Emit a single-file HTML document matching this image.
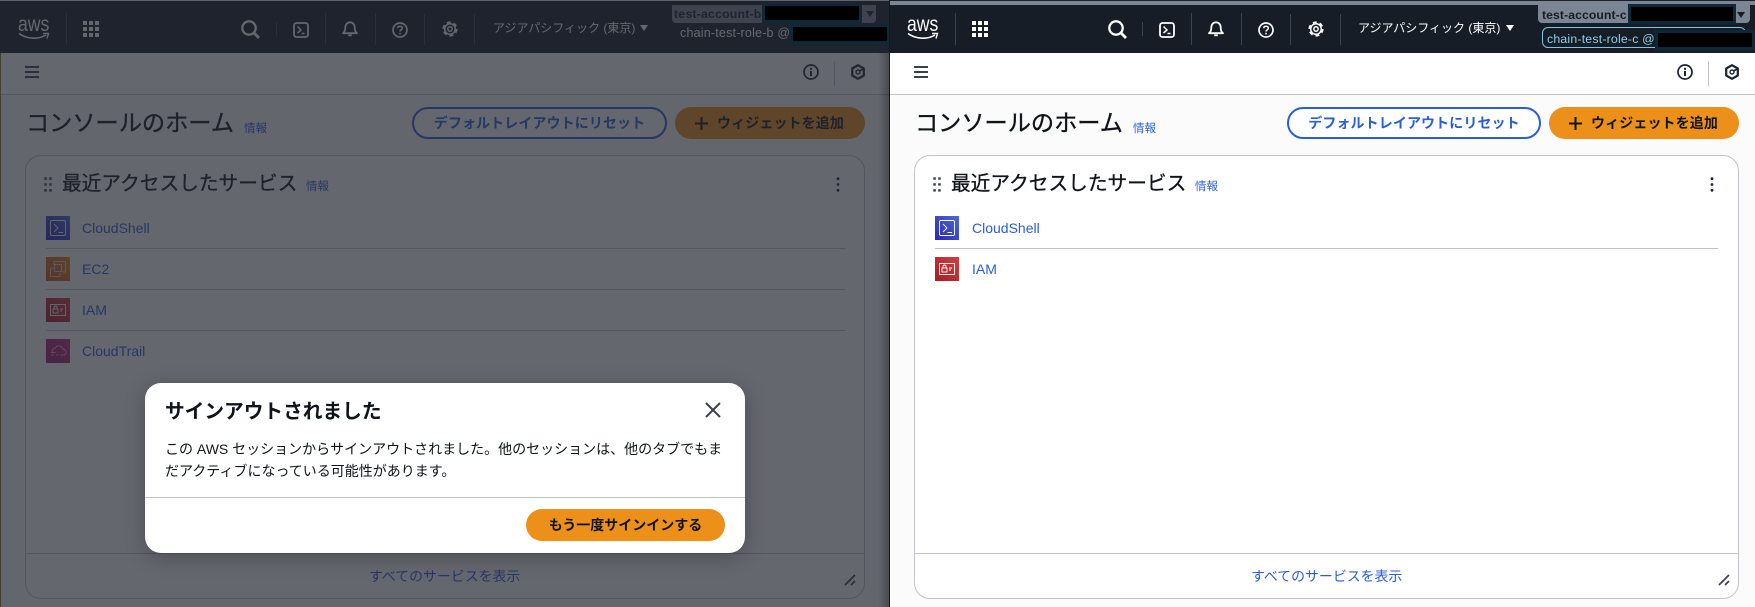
<!DOCTYPE html>
<html lang="ja">
<head>
<meta charset="utf-8">
<title>AWS Console</title>
<style>
html,body{margin:0;padding:0;background:#fff}
body{width:1755px;height:607px;position:relative;overflow:hidden;font-family:"Liberation Sans","Noto Sans CJK JP",sans-serif;color:#0f141a}
.p{position:absolute;top:0;height:607px;overflow:hidden;background:#fff}
.a{position:absolute}
.t{position:absolute;white-space:nowrap;line-height:20px;height:20px}
.nav{position:absolute;left:0;right:0;top:5px;height:48px;background:#161d26}
.strip{position:absolute;left:0;right:0;top:1px;height:4px;background:#7c8594}
.sep{position:absolute;width:1px;background:#3d4450}
.main{position:absolute;left:0;right:0;top:95px;bottom:0;background:#fbfbfb}
.tb{position:absolute;left:0;right:0;top:53px;height:41px;background:#fff;border-bottom:1px solid #c2c2cc}
.h1{font-size:23.2px;font-weight:400;-webkit-text-stroke:.35px currentColor;color:#0f141a;line-height:28px;height:28px}
.h2{font-size:19.7px;font-weight:400;-webkit-text-stroke:.3px currentColor;color:#0f141a;line-height:26px;height:26px}
.info{font-size:11.5px;color:#295eda}
.btn{position:absolute;top:107px;height:32px;border-radius:17px;box-sizing:border-box;text-align:center;font-size:14px;line-height:28px;font-weight:700}
.reset{width:255px;border:2px solid #295eda;color:#295eda;background:#fff;letter-spacing:.1px}
.add{width:190px;background:#ec9019;color:#0f141a;line-height:32px;letter-spacing:.1px;padding-left:21px}
.card{position:absolute;top:155px;height:444px;box-sizing:border-box;background:#fff;border:1.5px solid #c2c2cc;border-radius:16px}
.link{font-size:14px;color:#295eda}
.row{position:absolute;height:1px;background:#c2c2cc}
.ic{position:absolute;width:24px;height:24px}
.k{position:absolute;background:#000;box-shadow:0 0 0 3px #0e2838}
.logo{transform:scaleX(.84);transform-origin:left center}
svg{position:absolute;display:block;overflow:visible}
.ov{position:absolute;left:0;top:0;width:889px;height:607px;background:rgba(35,39,50,.7)}
.sh{position:absolute;left:878px;top:53px;width:11px;height:554px;background:linear-gradient(90deg,rgba(0,0,0,0),rgba(0,0,0,.28))}
.modal{position:absolute;left:145px;top:383px;width:600px;height:170px;background:#fff;border-radius:16px;box-shadow:0 4px 20px rgba(0,0,0,.25)}
</style>
</head>
<body>
<svg width="0" height="0" style="position:absolute">
<defs>
<symbol id="smile" viewBox="0 0 32 9"><path d="M1 1.5C9 7.5 21 7.5 28 3" fill="none" stroke="currentColor" stroke-width="1.6"/><path d="M25 1.5h5.5L29 6.5" fill="none" stroke="currentColor" stroke-width="1.4"/></symbol>
<symbol id="grid" viewBox="0 0 16 16"><g fill="currentColor"><rect x="0" y="0" width="4" height="4"/><rect x="6" y="0" width="4" height="4"/><rect x="12" y="0" width="4" height="4"/><rect x="0" y="6" width="4" height="4"/><rect x="6" y="6" width="4" height="4"/><rect x="12" y="6" width="4" height="4"/><rect x="0" y="12" width="4" height="4"/><rect x="6" y="12" width="4" height="4"/><rect x="12" y="12" width="4" height="4"/></g></symbol>
<symbol id="search" viewBox="0 0 19 19"><circle cx="8" cy="8" r="6.7" fill="none" stroke="currentColor" stroke-width="2.3"/><path d="M12.8 12.8L18 18" stroke="currentColor" stroke-width="2.8" fill="none"/></symbol>
<symbol id="term" viewBox="0 0 16 16"><rect x="1" y="1" width="14" height="14" rx="2.5" fill="none" stroke="currentColor" stroke-width="1.8"/><path d="M4.5 4.5L8 8 4.5 11" fill="none" stroke="currentColor" stroke-width="1.5"/><path d="M8.5 11.5h3" stroke="currentColor" stroke-width="1.5"/></symbol>
<symbol id="bell" viewBox="0 0 16 16"><path d="M1 12.2h14c-2-1.5-2.3-3-2.3-5.5C12.7 3.500 10.8 1.300 8 1.300S3.300 3.500 3.300 6.700C3.300 9.200 3 10.700 1 12.200z" fill="none" stroke="currentColor" stroke-width="1.8" stroke-linejoin="round"/><path d="M6.200 14.300h3.600" stroke="currentColor" stroke-width="1.8"/></symbol>
<symbol id="help" viewBox="0 0 16 16"><circle cx="8" cy="8" r="7" fill="none" stroke="currentColor" stroke-width="1.7"/><path d="M5.700 6.200C5.800 4.800 6.800 4.200 8 4.200c1.300 0 2.300.8 2.300 2 0 1.600-2.300 1.700-2.300 3.300" fill="none" stroke="currentColor" stroke-width="1.5"/><rect x="7.200" y="10.800" width="1.600" height="1.600" fill="currentColor"/></symbol>
<symbol id="gear" viewBox="0 0 16 16"><circle cx="8" cy="8" r="5.300" fill="none" stroke="currentColor" stroke-width="1.500"/><circle cx="8" cy="8" r="6.700" fill="none" stroke="currentColor" stroke-width="1.800" stroke-dasharray="4 3.020"/><circle cx="8" cy="8" r="2.200" fill="none" stroke="currentColor" stroke-width="1.500"/></symbol>
<symbol id="burger" viewBox="0 0 14 12"><path d="M0 1h14M0 6h14M0 11h14" stroke="currentColor" stroke-width="2" fill="none"/></symbol>
<symbol id="iinfo" viewBox="0 0 16 16"><circle cx="8" cy="8" r="7" fill="none" stroke="currentColor" stroke-width="1.7"/><path d="M8 7v5" stroke="currentColor" stroke-width="2"/><rect x="7" y="3.800" width="2" height="2" fill="currentColor"/></symbol>
<symbol id="hex" viewBox="0 0 14 16"><path d="M7 1.200L12.800 4.500V11.500L7 14.800 1.200 11.500V4.500z" fill="none" stroke="currentColor" stroke-width="2.200" stroke-linejoin="round"/><circle cx="7" cy="8" r="2" fill="none" stroke="currentColor" stroke-width="1.400"/><path d="M8.500 7L12.500 4.800" stroke="currentColor" stroke-width="1.600"/></symbol>
<symbol id="plus" viewBox="0 0 14 14"><path d="M7 0v14M0 7h14" stroke="currentColor" stroke-width="2.200" fill="none"/></symbol>
<symbol id="drag" viewBox="0 0 8 15"><g fill="currentColor"><rect x=".3" y=".3" width="2.500" height="2.500"/><rect x="5.200" y=".3" width="2.500" height="2.500"/><rect x=".3" y="6.200" width="2.500" height="2.500"/><rect x="5.200" y="6.200" width="2.500" height="2.500"/><rect x=".3" y="12.100" width="2.500" height="2.500"/><rect x="5.200" y="12.100" width="2.500" height="2.500"/></g></symbol>
<symbol id="kebab" viewBox="0 0 4 15"><g fill="currentColor"><circle cx="2" cy="1.700" r="1.400"/><circle cx="2" cy="7.500" r="1.400"/><circle cx="2" cy="13.300" r="1.400"/></g></symbol>
<symbol id="resize" viewBox="0 0 12 12"><path d="M1 11L11 1M7 11l4-4" stroke="currentColor" stroke-width="1.700" fill="none"/></symbol>
<linearGradient id="gb" x1="0" y1="1" x2="1" y2="0"><stop offset="0" stop-color="#2e27ad"/><stop offset="1" stop-color="#4b6ae0"/></linearGradient>
<linearGradient id="go" x1="0" y1="1" x2="1" y2="0"><stop offset="0" stop-color="#c8511b"/><stop offset="1" stop-color="#e08a20"/></linearGradient>
<linearGradient id="gr" x1="0" y1="1" x2="1" y2="0"><stop offset="0" stop-color="#a81c27"/><stop offset="1" stop-color="#d04040"/></linearGradient>
<linearGradient id="gp" x1="0" y1="1" x2="1" y2="0"><stop offset="0" stop-color="#a01a6a"/><stop offset="1" stop-color="#c0307c"/></linearGradient>
<symbol id="svc-shell" viewBox="0 0 24 24"><rect width="24" height="24" fill="url(#gb)"/><rect x="4.500" y="4.500" width="15" height="15" rx="1.500" fill="none" stroke="#fff" stroke-width=".9"/><path d="M8 8l4 4-4 4M12.500 16.500h4.500" fill="none" stroke="#fff" stroke-width=".9"/></symbol>
<symbol id="svc-ec2" viewBox="0 0 24 24"><rect width="24" height="24" fill="url(#go)"/><path d="M8 8V4.500h11.500V15H16M8 11H4.500v8.500H14V16" fill="none" stroke="#fff" stroke-width=".8" opacity=".8"/><rect x="8.500" y="7.500" width="7" height="7" fill="none" stroke="#fff" stroke-width="1" stroke-dasharray="1.500 .5" opacity=".8"/></symbol>
<symbol id="svc-iam" viewBox="0 0 24 24"><rect width="24" height="24" fill="url(#gr)"/><rect x="4.500" y="6.500" width="15" height="11" fill="none" stroke="#fff" stroke-width=".9"/><rect x="7" y="11" width="5" height="4" fill="none" stroke="#fff" stroke-width=".9"/><path d="M8 11V9.500a1.500 1.500 0 013 0V11M14 11h3M14 13h2" fill="none" stroke="#fff" stroke-width=".9"/></symbol>
<symbol id="svc-trail" viewBox="0 0 24 24"><rect width="24" height="24" fill="url(#gp)"/><path d="M6 13c0-3 2-3.500 3-3.500C10 7 12 6.500 14 7c1.500.5 2.500 2 2.500 3 2 0 3.500 1.500 3.500 3.500 0 1.500-1 2.500-2.500 2.500h-3M5 16h3M10 16h2.500M4.500 13.500h5" fill="none" stroke="#fff" stroke-width=".7" opacity=".8"/></symbol>
</defs>
</svg>

<!-- LEFT PANEL -->
<div class="p" style="left:0;width:889px">
  <div class="a" style="left:0;top:0;width:889px;height:1px;background:#f0f0f0"></div>
  <div class="nav" style="top:1px;height:52px"></div>

  <div class="t logo" style="left:18px;top:15px;font-size:21px;color:#fff">aws</div>
  <svg style="left:18px;top:32px;color:#fff" width="32" height="9"><use href="#smile"/></svg>
  <div class="sep" style="left:66px;top:13px;height:32px"></div>
  <svg style="left:83px;top:21px;color:#fff" width="16" height="16"><use href="#grid"/></svg>
  <svg style="left:241px;top:20px;color:#fff" width="19" height="19"><use href="#search"/></svg>
  <div class="sep" style="left:276px;top:22px;height:14px"></div>
  <svg style="left:293px;top:22px;color:#fff" width="16" height="16"><use href="#term"/></svg>
  <div class="sep" style="left:325px;top:13px;height:32px"></div>
  <svg style="left:342px;top:21px;color:#fff" width="16" height="16"><use href="#bell"/></svg>
  <div class="sep" style="left:375px;top:13px;height:32px"></div>
  <svg style="left:392px;top:22px;color:#fff" width="16" height="16"><use href="#help"/></svg>
  <div class="sep" style="left:424px;top:14px;height:31px"></div>
  <svg style="left:442px;top:21px;color:#fff" width="16" height="16"><use href="#gear"/></svg>
  <div class="sep" style="left:474px;top:14px;height:31px"></div>
  <div class="t" style="left:493px;top:18px;font-size:12px;color:#fff">アジアパシフィック (東京)</div>
  <svg style="left:640px;top:25px" width="8" height="6"><path d="M0 0h8L4 6z" fill="#fff"/></svg>

  <div class="a" style="left:672px;top:5px;width:204px;height:18px;background:#7c8594;border-radius:0 0 4px 4px"></div>
  <div class="t" style="left:672px;top:4px;width:90px;overflow:hidden;font-size:12.3px;font-weight:700;color:#161d26;letter-spacing:.2px"><span style="margin-left:2px">test-account-b (</span></div>
  <svg style="left:866px;top:11px" width="8" height="6"><path d="M0 0h8L4 6z" fill="#161d26"/></svg>
  <div class="t" style="left:680px;top:23px;font-size:12.5px;color:#fff;letter-spacing:.2px">chain-test-role-b @</div>

  <div class="tb"></div>
  <svg style="left:25px;top:66px;color:#3b414d" width="14" height="12"><use href="#burger"/></svg>
  <svg style="left:803px;top:64px;color:#1b232d" width="16" height="16"><use href="#iinfo"/></svg>
  <div class="a" style="left:834px;top:61px;width:1px;height:25px;background:#c2c2cc"></div>
  <svg style="left:851px;top:64px;color:#1b232d" width="14" height="16"><use href="#hex"/></svg>

  <div class="main"></div>
  <div class="t h1" style="left:26px;top:109px">コンソールのホーム</div>
  <div class="t info" style="left:244px;top:119px">情報</div>
  <div class="btn reset" style="left:412px">デフォルトレイアウトにリセット</div>
  <div class="btn add" style="left:675px">ウィジェットを追加</div>
  <svg style="left:695px;top:117px;color:#0f141a" width="13" height="13"><use href="#plus"/></svg>

  <div class="card" style="left:25px;width:840px"></div>
  <svg style="left:44px;top:177px;color:#3b414d" width="8" height="15"><use href="#drag"/></svg>
  <div class="t h2" style="left:62px;top:171px">最近アクセスしたサービス</div>
  <div class="t info" style="left:306px;top:177px">情報</div>
  <svg style="left:836px;top:177px;color:#1b232d" width="4" height="15"><use href="#kebab"/></svg>

  <svg class="ic" style="left:46px;top:216px"><use href="#svc-shell"/></svg>
  <div class="t link" style="left:82px;top:218px">CloudShell</div>
  <div class="row" style="left:46px;top:248px;width:799px"></div>
  <svg class="ic" style="left:46px;top:257px"><use href="#svc-ec2"/></svg>
  <div class="t link" style="left:82px;top:259px">EC2</div>
  <div class="row" style="left:46px;top:289px;width:799px"></div>
  <svg class="ic" style="left:46px;top:298px"><use href="#svc-iam"/></svg>
  <div class="t link" style="left:82px;top:300px">IAM</div>
  <div class="row" style="left:46px;top:330px;width:799px"></div>
  <svg class="ic" style="left:46px;top:339px"><use href="#svc-trail"/></svg>
  <div class="t link" style="left:82px;top:341px">CloudTrail</div>

  <div class="row" style="left:25px;top:553px;width:840px"></div>
  <div class="t link" style="left:369px;top:566px;font-size:13.9px">すべてのサービスを表示</div>
  <svg style="left:844px;top:574px;color:#3b414d" width="12" height="12"><use href="#resize"/></svg>

  <div class="ov"></div>
  <div class="sh"></div>
  <div class="a" style="left:0;top:53px;width:1px;height:554px;background:#3f4030"></div>
  <div class="k" style="left:765px;top:6px;width:94px;height:14px"></div>
  <div class="k" style="left:793px;top:27px;width:94px;height:14px"></div>

  <div class="modal">
    <div class="t" style="left:20px;top:16px;font-size:19.7px;font-weight:700;color:#0f141a;line-height:26px;height:26px">サインアウトされました</div>
    <svg style="left:560px;top:19px" width="16" height="16"><path d="M1 1l14 14M15 1L1 15" stroke="#3b414d" stroke-width="2" fill="none"/></svg>
    <div class="t" style="left:20px;top:56px;font-size:14px;color:#0f141a">この AWS セッションからサインアウトされました。他のセッションは、他のタブでもま</div>
    <div class="t" style="left:20px;top:78px;font-size:14px;color:#0f141a">だアクティブになっている可能性があります。</div>
    <div class="a" style="left:0;top:114px;width:600px;height:1px;background:#c2c2cc"></div>
    <div class="a" style="left:381px;top:126px;width:199px;height:32px;border-radius:17px;background:#ec9019;text-align:center;font-size:14px;font-weight:700;line-height:32px;color:#0f141a">もう一度サインインする</div>
  </div>
</div>

<!-- divider -->
<div class="a" style="left:889px;top:0;width:1.5px;height:607px;background:#14181e"></div>

<!-- RIGHT PANEL -->
<div class="p" style="left:890px;width:865px">
  <div class="a" style="left:0;top:0;width:865px;height:1px;background:#1d2129"></div>
  <div class="strip"></div>
  <div class="nav"></div>
</div>
<div class="a" style="left:890px;top:53px;width:865px;height:554px;background:#fff"></div>

<div class="t logo" style="left:907px;top:15px;font-size:21px;color:#fff">aws</div>
<svg style="left:907px;top:32px;color:#fff" width="32" height="9"><use href="#smile"/></svg>
<div class="sep" style="left:955px;top:13px;height:32px"></div>
<svg style="left:972px;top:21px;color:#fff" width="16" height="16"><use href="#grid"/></svg>
<svg style="left:1108px;top:20px;color:#fff" width="19" height="19"><use href="#search"/></svg>
<div class="sep" style="left:1142px;top:22px;height:14px"></div>
<svg style="left:1159px;top:22px;color:#fff" width="16" height="16"><use href="#term"/></svg>
<div class="sep" style="left:1191px;top:13px;height:32px"></div>
<svg style="left:1208px;top:21px;color:#fff" width="16" height="16"><use href="#bell"/></svg>
<div class="sep" style="left:1241px;top:13px;height:32px"></div>
<svg style="left:1258px;top:22px;color:#fff" width="16" height="16"><use href="#help"/></svg>
<div class="sep" style="left:1290px;top:14px;height:31px"></div>
<svg style="left:1308px;top:21px;color:#fff" width="16" height="16"><use href="#gear"/></svg>
<div class="sep" style="left:1340px;top:14px;height:31px"></div>
<div class="t" style="left:1358px;top:18px;font-size:12px;color:#fff">アジアパシフィック (東京)</div>
<svg style="left:1506px;top:25px" width="8" height="6"><path d="M0 0h8L4 6z" fill="#fff"/></svg>

<div class="a" style="left:1538px;top:5px;width:212px;height:18px;background:#7c8594;border-radius:0 0 4px 4px"></div>
<div class="t" style="left:1542px;top:5px;font-size:12.2px;font-weight:700;color:#161d26;letter-spacing:.1px">test-account-c</div>
<div class="k" style="left:1631px;top:7px;width:102px;height:14px"></div>
<svg style="left:1737px;top:12px" width="8" height="6"><path d="M0 0h8L4 6z" fill="#161d26"/></svg>
<div class="a" style="left:1542px;top:27px;width:204px;height:21px;box-sizing:border-box;border:1px solid #7fc4e0;border-radius:6px"></div>
<div class="t" style="left:1547px;top:29px;font-size:12.3px;color:#8fd0ea;letter-spacing:.2px">chain-test-role-c @</div>
<div class="k" style="left:1658px;top:33px;width:94px;height:14px"></div>

<div class="a" style="left:890px;top:53px;width:865px;height:41px;background:#fff;border-bottom:1px solid #c2c2cc"></div>
<svg style="left:914px;top:66px;color:#3b414d" width="14" height="12"><use href="#burger"/></svg>
<svg style="left:1677px;top:64px;color:#1b232d" width="16" height="16"><use href="#iinfo"/></svg>
<div class="a" style="left:1708px;top:61px;width:1px;height:25px;background:#c2c2cc"></div>
<svg style="left:1725px;top:64px;color:#1b232d" width="14" height="16"><use href="#hex"/></svg>

<div class="a" style="left:890px;top:95px;width:865px;height:512px;background:#fbfbfb"></div>
<div class="t h1" style="left:915px;top:109px">コンソールのホーム</div>
<div class="t info" style="left:1133px;top:119px">情報</div>
<div class="btn reset" style="left:1287px;width:254px">デフォルトレイアウトにリセット</div>
<div class="btn add" style="left:1549px">ウィジェットを追加</div>
<svg style="left:1569px;top:117px;color:#0f141a" width="13" height="13"><use href="#plus"/></svg>

<div class="card" style="left:914px;width:825px"></div>
<svg style="left:933px;top:177px;color:#3b414d" width="8" height="15"><use href="#drag"/></svg>
<div class="t h2" style="left:951px;top:171px">最近アクセスしたサービス</div>
<div class="t info" style="left:1195px;top:177px">情報</div>
<svg style="left:1710px;top:177px;color:#1b232d" width="4" height="15"><use href="#kebab"/></svg>

<svg class="ic" style="left:935px;top:216px"><use href="#svc-shell"/></svg>
<div class="t link" style="left:972px;top:218px">CloudShell</div>
<div class="row" style="left:935px;top:248px;width:783px"></div>
<svg class="ic" style="left:935px;top:257px"><use href="#svc-iam"/></svg>
<div class="t link" style="left:972px;top:259px">IAM</div>

<div class="row" style="left:914px;top:553px;width:825px"></div>
<div class="t link" style="left:1251px;top:566px;font-size:13.9px">すべてのサービスを表示</div>
<svg style="left:1718px;top:574px;color:#3b414d" width="12" height="12"><use href="#resize"/></svg>
</body>
</html>
